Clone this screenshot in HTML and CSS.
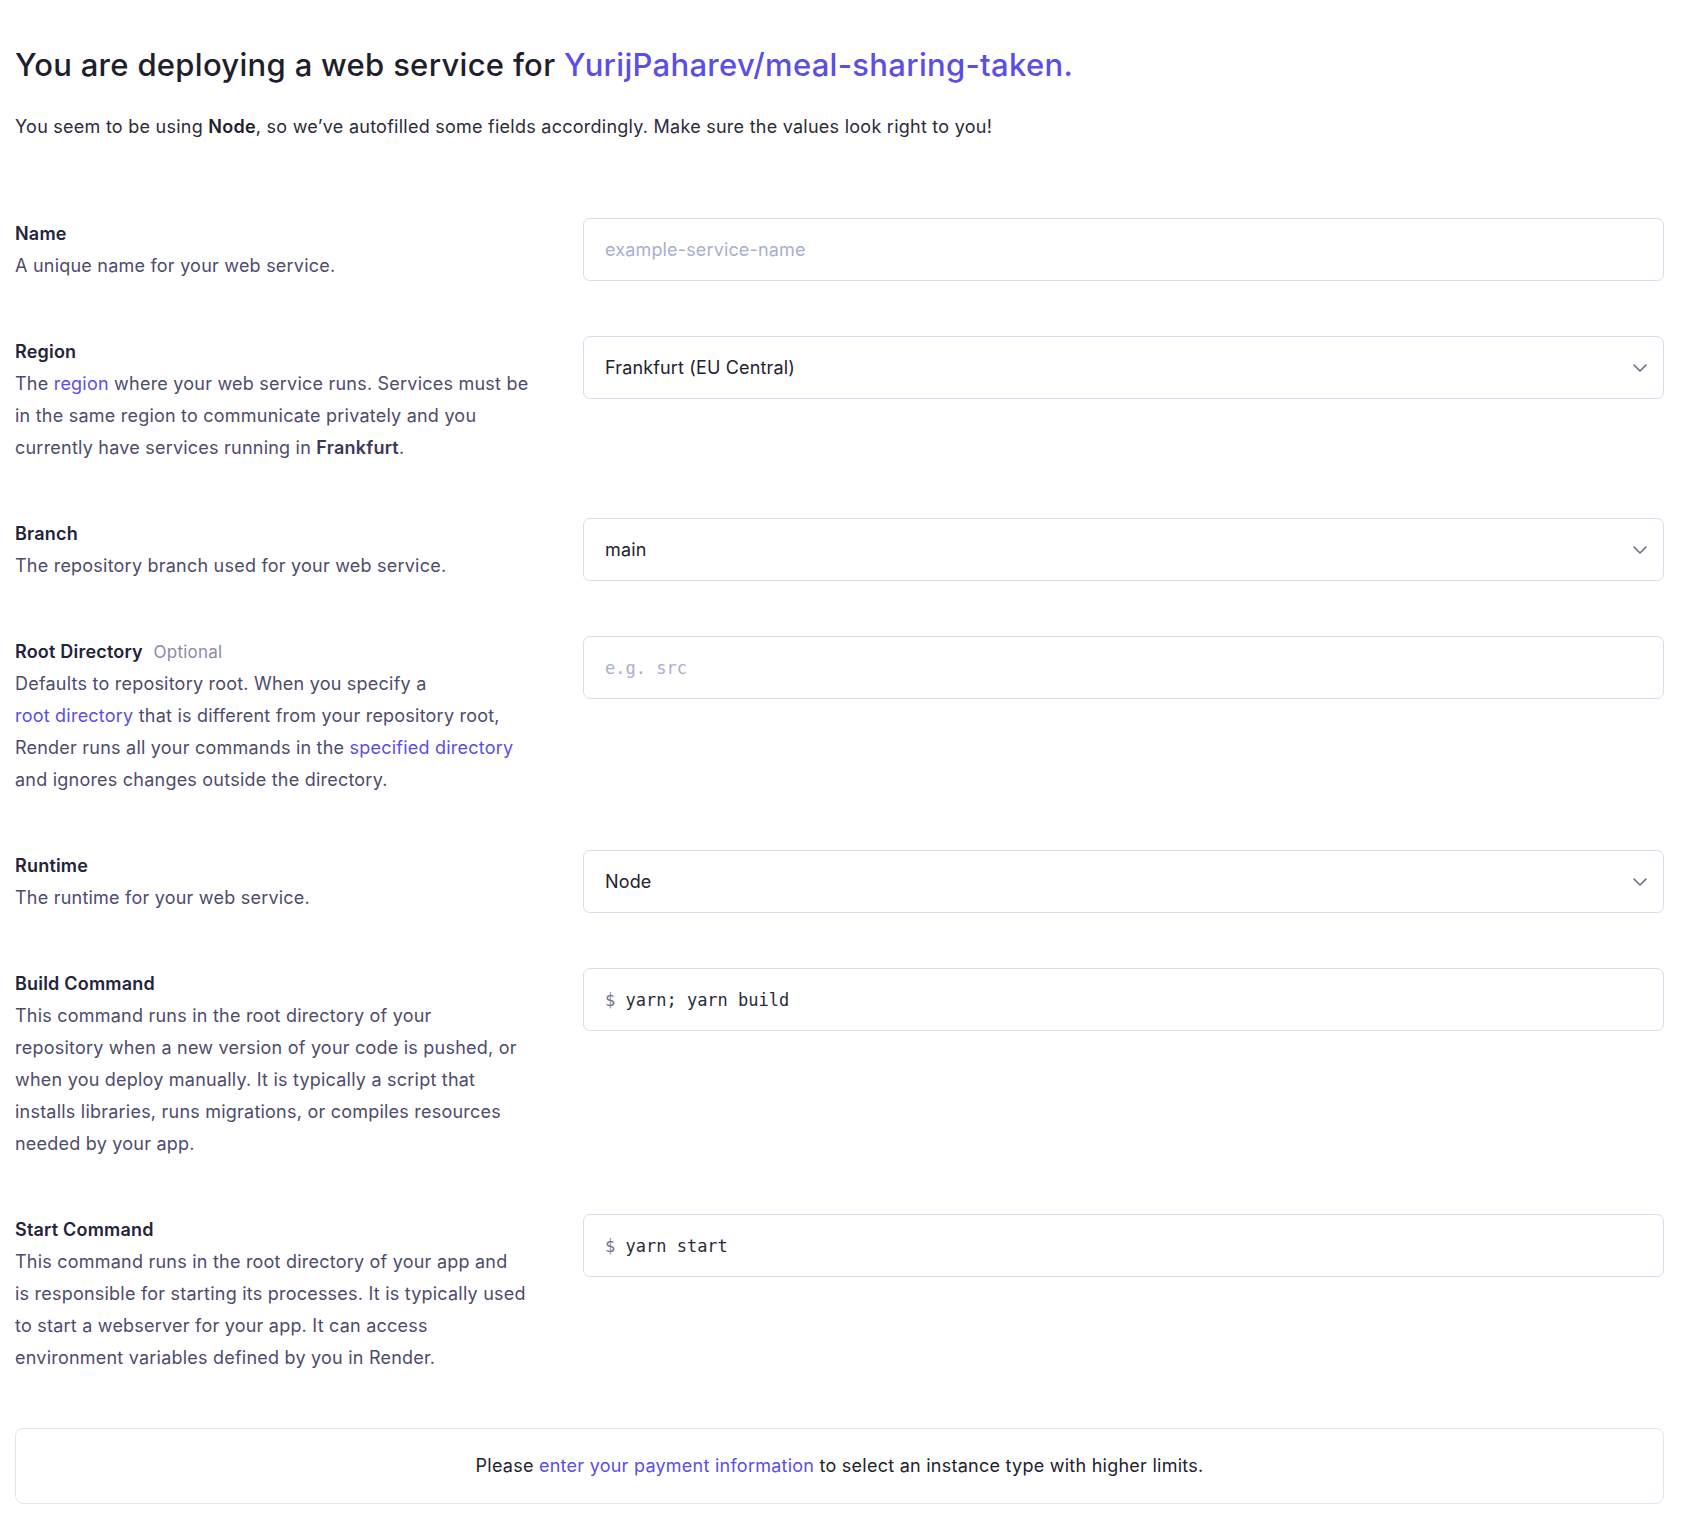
FILE: index.html
```html
<!DOCTYPE html>
<html lang="en">
<head>
<meta charset="utf-8">
<title>Deploy web service</title>
<link rel="stylesheet" href="styles.css">
</head>
<body>
<main class="page">
  <h1 class="title">You are deploying a web service for <a class="link" href="#">YurijPaharev/meal-sharing-taken.</a></h1>
  <p class="intro">You seem to be using <strong>Node</strong>, so we’ve autofilled some fields accordingly. Make sure the values look right to you!</p>

  <section class="form">
    <div class="row">
      <div class="info">
        <div class="label">Name</div>
        <div class="desc">A unique name for your web service.</div>
      </div>
      <div class="field"><span class="placeholder">example-service-name</span></div>
    </div>

    <div class="row">
      <div class="info">
        <div class="label">Region</div>
        <div class="desc">The <a class="link" href="#">region</a> where your web service runs. Services must be in the same region to communicate privately and you currently have services running in <strong>Frankfurt</strong>.</div>
      </div>
      <div class="field select"><span class="value">Frankfurt (EU Central)</span><svg class="chev" width="14" height="8" viewBox="0 0 14 8"><polyline points="1,1 7,7 13,1" fill="none" stroke="#6d6c84" stroke-width="1.6" stroke-linecap="round" stroke-linejoin="round"/></svg></div>
    </div>

    <div class="row">
      <div class="info">
        <div class="label">Branch</div>
        <div class="desc">The repository branch used for your web service.</div>
      </div>
      <div class="field select"><span class="value">main</span><svg class="chev" width="14" height="8" viewBox="0 0 14 8"><polyline points="1,1 7,7 13,1" fill="none" stroke="#6d6c84" stroke-width="1.6" stroke-linecap="round" stroke-linejoin="round"/></svg></div>
    </div>

    <div class="row">
      <div class="info">
        <div class="label">Root Directory <span class="optional">Optional</span></div>
        <div class="desc">Defaults to repository root. When you specify a <a class="link" href="#">root directory</a> that is different from your repository root, Render runs all your commands in the <a class="link" href="#">specified directory</a> and ignores changes outside the directory.</div>
      </div>
      <div class="field"><span class="placeholder mono">e.g. src</span></div>
    </div>

    <div class="row">
      <div class="info">
        <div class="label">Runtime</div>
        <div class="desc">The runtime for your web service.</div>
      </div>
      <div class="field select"><span class="value">Node</span><svg class="chev" width="14" height="8" viewBox="0 0 14 8"><polyline points="1,1 7,7 13,1" fill="none" stroke="#6d6c84" stroke-width="1.6" stroke-linecap="round" stroke-linejoin="round"/></svg></div>
    </div>

    <div class="row">
      <div class="info">
        <div class="label">Build Command</div>
        <div class="desc narrow">This command runs in the root directory of your repository when a new version of your code is pushed, or when you deploy manually. It is typically a script that installs libraries, runs migrations, or compiles resources needed by your app.</div>
      </div>
      <div class="field"><span class="mono"><span class="dollar">$</span> yarn; yarn build</span></div>
    </div>

    <div class="row">
      <div class="info">
        <div class="label">Start Command</div>
        <div class="desc">This command runs in the root directory of your app and is&nbsp;responsible for starting its processes. It is typically used to start a webserver for your app. It can access environment variables defined by you in Render.</div>
      </div>
      <div class="field"><span class="mono"><span class="dollar">$</span> yarn start</span></div>
    </div>
  </section>

  <div class="notice">Please <a class="link" href="#">enter your payment information</a> to select an instance type with higher limits.</div>
</main>
</body>
</html>
```

FILE: styles.css
```css
* { box-sizing: border-box; }

html, body {
  margin: 0;
  padding: 0;
  background: #ffffff;
}

body {
  font-family: Inter, "Noto Sans", "Liberation Sans", sans-serif;
  color: #2a2a3c;
  letter-spacing: 0.25px;
}

.page {
  padding: 45px 24px 20px 15px;
}

.link {
  color: #5b4ee6;
  text-decoration: none;
  white-space: nowrap;
}

.title {
  margin: 0;
  font-size: 31px;
  line-height: 40px;
  font-weight: 550;
  color: #1e1e2c;
  letter-spacing: 0.3px;
}

.intro {
  margin: 26px 0 0;
  font-size: 18px;
  line-height: 32px;
  color: #2b2b3a;
}

.intro strong { font-weight: 600; color: #1e1e2c; }

.form {
  margin-top: 75px;
  display: flex;
  flex-direction: column;
  gap: 54px;
}

.row {
  display: grid;
  grid-template-columns: 515px 1fr;
  column-gap: 53px;
  align-items: start;
}

.label {
  font-size: 18px;
  line-height: 32px;
  font-weight: 600;
  color: #23233a;
  letter-spacing: 0.2px;
}

.optional {
  font-weight: 400;
  font-size: 17px;
  color: #8b8aa6;
  margin-left: 6px;
}

.desc {
  font-size: 18px;
  line-height: 32px;
  color: #4e4b6c;
  letter-spacing: 0.22px;
}

.desc.narrow { max-width: 508px; }

.desc strong { font-weight: 600; color: #3b3858; }

.field {
  height: 63px;
  border: 1px solid #d7ddee;
  border-radius: 7px;
  display: flex;
  align-items: center;
  padding: 0 16px 0 21px;
  font-size: 18px;
  color: #22222e;
  letter-spacing: 0.15px;
}

.select { justify-content: space-between; }

.chev { flex: none; }

.placeholder { color: #a9afcf; }

.mono {
  font-family: "DejaVu Sans Mono", "Liberation Mono", monospace;
  font-size: 17px;
  color: #2b2b3a;
  letter-spacing: 0;
}

.placeholder.mono { color: #a9afcf; }

.dollar { color: #777790; }

.notice {
  margin-top: 54px;
  border: 1px solid #e0e6f2;
  border-radius: 8px;
  padding: 21px 16px;
  text-align: center;
  font-size: 18px;
  line-height: 32px;
  color: #22222e;
}
```
